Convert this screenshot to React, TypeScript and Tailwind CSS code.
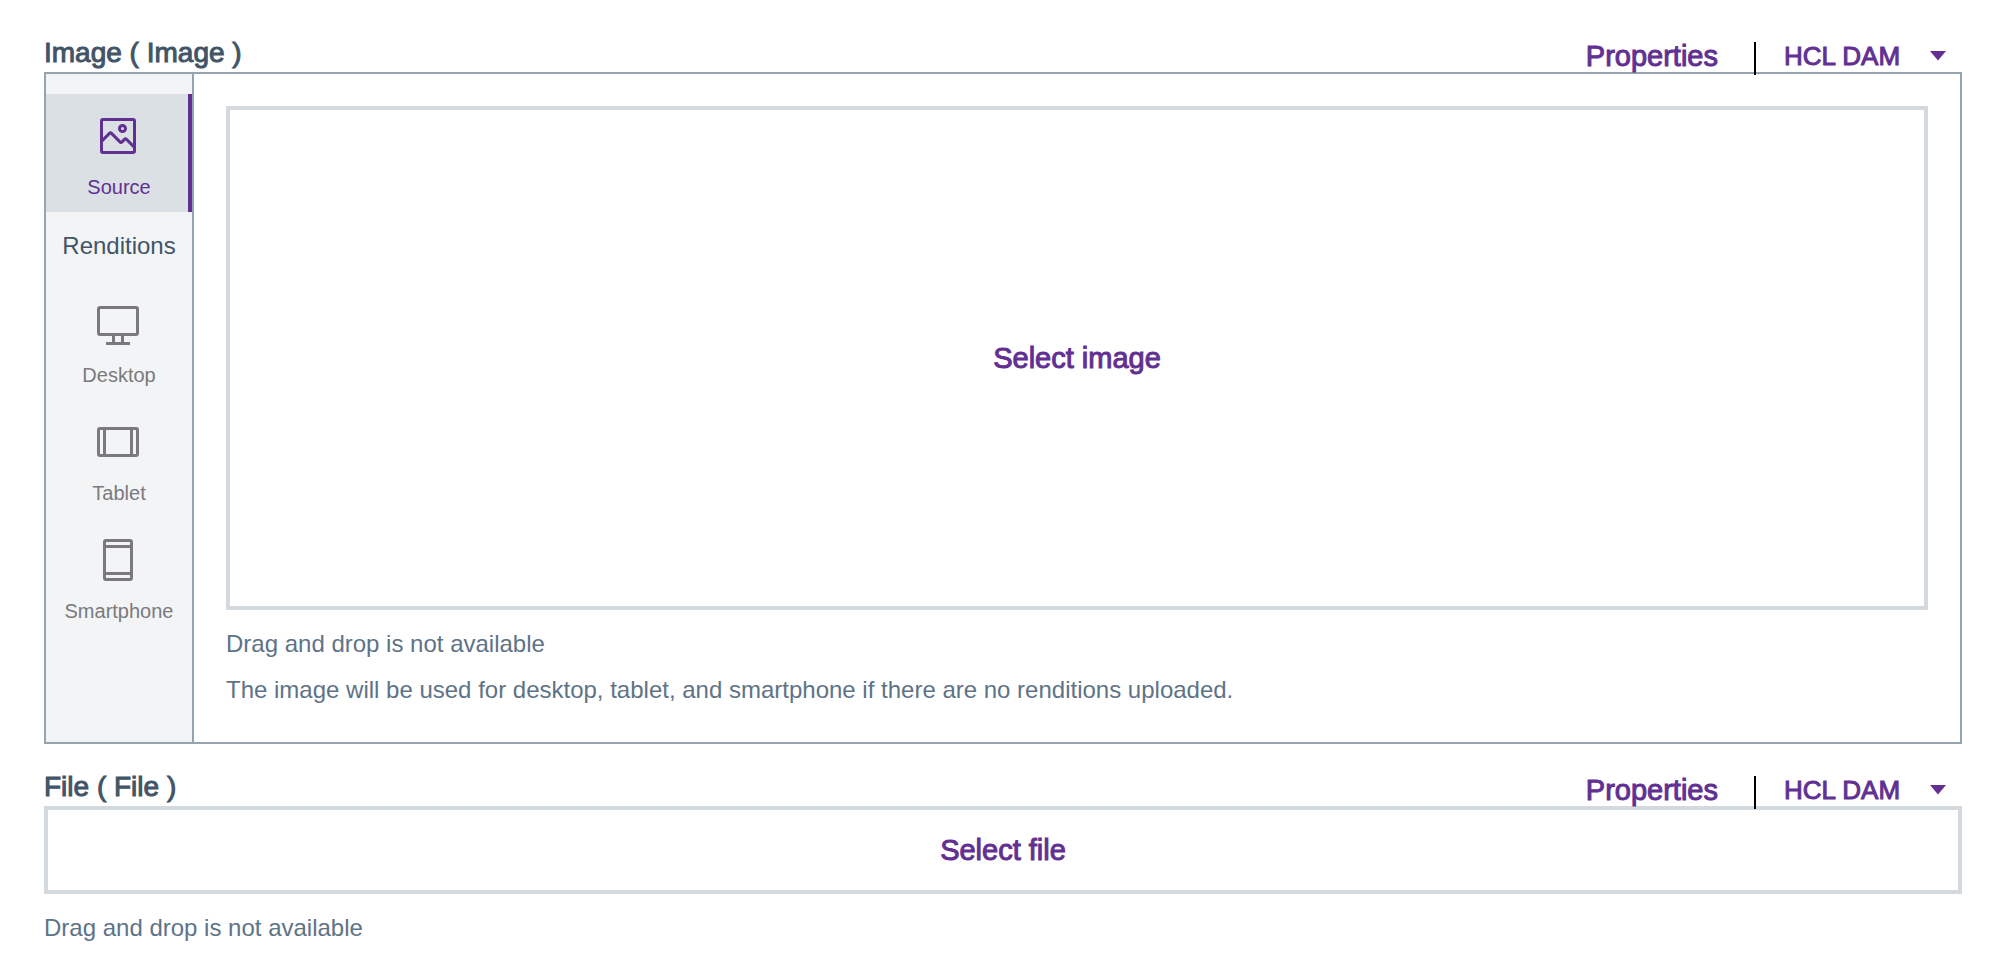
import type { ReactNode } from "react";

const emphasis = "[-webkit-text-stroke:1px_currentColor]";

function Icon({ children }: { children: ReactNode }) {
  return (
    <svg viewBox="0 0 32 32" fill="currentColor" aria-hidden="true" className="mr-0.5 size-12">
      {children}
    </svg>
  );
}

const SourceIcon = () => (
  <Icon>
    <path d="M19,14a3,3,0,1,0-3-3A3,3,0,0,0,19,14Zm0-4a1,1,0,1,1-1,1A1,1,0,0,1,19,10Z" />
    <path d="M26,4H6A2,2,0,0,0,4,6V26a2,2,0,0,0,2,2H26a2,2,0,0,0,2-2V6A2,2,0,0,0,26,4Zm0,22H6V20l5-5,5.59,5.59a2,2,0,0,0,2.82,0L21,19l5,5Zm0-4.83-3.59-3.59a2,2,0,0,0-2.82,0L18,19.17l-5.59-5.59a2,2,0,0,0-2.82,0L6,17.17V6H26Z" />
  </Icon>
);

const DesktopIcon = () => (
  <Icon>
    <path d="M28,4H4A2,2,0,0,0,2,6V22a2,2,0,0,0,2,2h8v4H8v2H24V28H20V24h8a2,2,0,0,0,2-2V6A2,2,0,0,0,28,4ZM18,28H14V24h4Zm10-6H4V6H28Z" />
  </Icon>
);

const TabletIcon = () => (
  <Icon>
    <path d="M28,6H4A2,2,0,0,0,2,8V24a2,2,0,0,0,2,2H28a2,2,0,0,0,2-2V8A2,2,0,0,0,28,6ZM4,8H6V24H4ZM8,24V8H24V24Zm20,0H26V8h2Z" />
  </Icon>
);

const SmartphoneIcon = () => (
  <Icon>
    <path d="M24,2H8A2,2,0,0,0,6,4V28a2,2,0,0,0,2,2H24a2,2,0,0,0,2-2V4A2,2,0,0,0,24,2ZM24,4V6H8V4ZM24,8V24H8V8ZM8,28V26H24v2Z" />
  </Icon>
);

function SideTab({ icon, label, active = false }: { icon: ReactNode; label: string; active?: boolean }) {
  return (
    <button
      type="button"
      aria-pressed={active}
      className={
        "flex w-full flex-col items-center pt-[18px] pb-3.5 " +
        (active ? "bg-[#dbe0e4] text-[#613092] shadow-[inset_-4px_0_0_#613092]" : "text-[#7a7a7c]")
      }
    >
      {icon}
      <span className="mt-4 text-[20px] leading-[22px]">{label}</span>
    </button>
  );
}

function FieldHeader({ title }: { title: string }) {
  return (
    <header className="flex items-end justify-between">
      <h2 className={`pb-[3px] text-[28px] leading-8 text-[#425466] ${emphasis}`}>{title}</h2>
      <div className="flex h-10 items-end text-[#613092]">
        <button type="button" className={`text-[29px] leading-8 ${emphasis}`}>
          Properties
        </button>
        <span className="relative -mb-[3px] ml-9 h-[33px] w-0.5 bg-black" />
        <div className="relative ml-7 w-[178px]">
          <select
            aria-label={`${title} source`}
            className={`block h-8 w-full appearance-none bg-transparent text-[26px] leading-8 ${emphasis}`}
          >
            <option>HCL DAM</option>
          </select>
          <svg
            viewBox="0 0 16 10"
            fill="currentColor"
            aria-hidden="true"
            className="pointer-events-none absolute top-[11px] right-4 h-2.5 w-4"
          >
            <path d="M0 0H16L8 9.5Z" />
          </svg>
        </div>
      </div>
    </header>
  );
}

function SelectZone({ label, className }: { label: string; className: string }) {
  return (
    <button
      type="button"
      className={`flex w-full items-center justify-center border-4 border-[#d4d9dd] text-[29px] leading-8 text-[#613092] ${emphasis} ${className}`}
    >
      {label}
    </button>
  );
}

export default function App() {
  return (
    <main className="flex min-h-screen flex-col gap-[22px] bg-white pt-8 pr-7 pb-6 pl-11 font-['Liberation_Sans',Arial,sans-serif]">
      <section>
        <FieldHeader title="Image ( Image )" />
        <div className="flex border-2 border-[#97a3af]">
          <nav className="w-[148px] shrink-0 border-r-2 border-[#97a3af] bg-[#f2f4f6] pt-5">
            <SideTab icon={<SourceIcon />} label="Source" active />
            <h3 className="pt-[19px] pb-[21px] text-center text-[24px] leading-[30px] text-[#425466]">Renditions</h3>
            <SideTab icon={<DesktopIcon />} label="Desktop" />
            <SideTab icon={<TabletIcon />} label="Tablet" />
            <SideTab icon={<SmartphoneIcon />} label="Smartphone" />
          </nav>
          <div className="min-w-0 grow px-8 pt-8 pb-[37px]">
            <SelectZone label="Select image" className="h-[504px]" />
            <div className="mt-[19px] flex flex-col gap-4 text-[24px] leading-[30px] text-[#5e7387]">
              <p>Drag and drop is not available</p>
              <p>The image will be used for desktop, tablet, and smartphone if there are no renditions uploaded.</p>
            </div>
          </div>
        </div>
      </section>
      <section>
        <FieldHeader title="File ( File )" />
        <SelectZone label="Select file" className="h-[88px]" />
        <p className="mt-[19px] text-[24px] leading-[30px] text-[#5e7387]">Drag and drop is not available</p>
      </section>
    </main>
  );
}
